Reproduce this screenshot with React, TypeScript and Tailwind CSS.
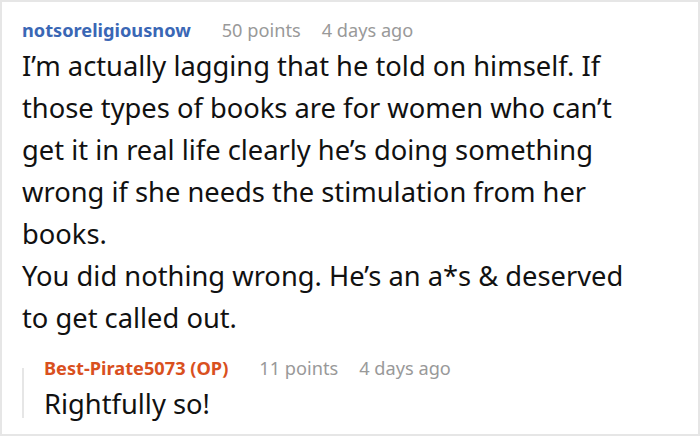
import React from "react";

export default function App() {
  return (
    <div
      className="w-[700px] h-[436px] border-2 border-[#e6e6e6] bg-white overflow-hidden"
      style={{ fontFamily: '"Noto Sans", "Open Sans", sans-serif' }}
    >
      <div className="pl-[20px] pt-[16px] w-[644px]">
        <div className="flex items-baseline text-[18.2px] leading-[24px] whitespace-nowrap">
          <span className="font-bold text-[#3a67b5]">notsoreligiousnow</span>
          <span className="ml-[31px] text-[#999999]">50 points</span>
          <span className="ml-[21px] text-[#999999]">4 days ago</span>
        </div>
        <div className="mt-[3px] text-[27.3px] leading-[42px] text-[#111111]">
          <p>
            I’m actually lagging that he told on himself. If those types of books are for women who can’t get it in real life clearly he’s doing something wrong if she needs the stimulation from her books.
          </p>
          <p>You did nothing wrong. He’s an a*s &amp; deserved to get called out.</p>
        </div>
        <div className="mt-[17px] flex">
          <div className="mt-[12px] mb-[7px] w-[2px] shrink-0 bg-[#e6e6e6]" />
          <div className="pl-[20px]">
            <div className="flex items-baseline text-[18.2px] leading-[24px] whitespace-nowrap">
              <span className="font-bold text-[#d9501e]">Best-Pirate5073 (OP)</span>
              <span className="ml-[31px] text-[#999999]">11 points</span>
              <span className="ml-[21px] text-[#999999]">4 days ago</span>
            </div>
            <div className="mt-[3px] text-[27.3px] leading-[42px] text-[#111111]">Rightfully so!</div>
          </div>
        </div>
      </div>
    </div>
  );
}
